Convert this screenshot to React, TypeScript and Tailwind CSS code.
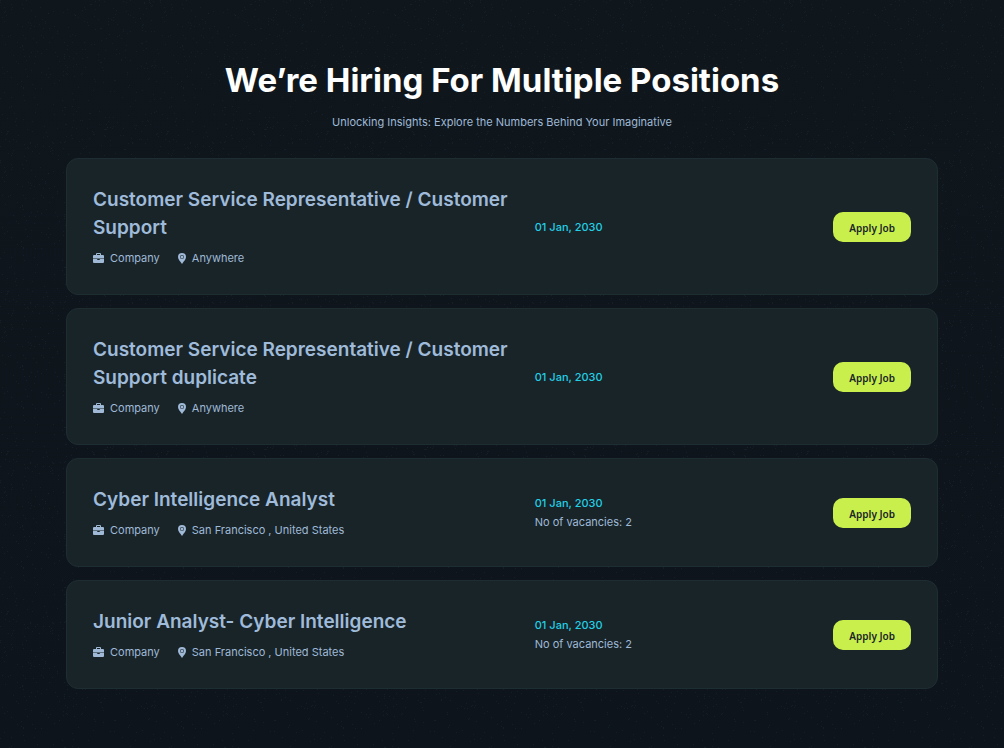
type Job = {
  title: string;
  company: string;
  location: string;
  date: string;
  vacancies?: number;
};

const jobs: Job[] = [
  {
    title: "Customer Service Representative / Customer Support",
    company: "Company",
    location: "Anywhere",
    date: "01 Jan, 2030",
  },
  {
    title: "Customer Service Representative / Customer Support duplicate",
    company: "Company",
    location: "Anywhere",
    date: "01 Jan, 2030",
  },
  {
    title: "Cyber Intelligence Analyst",
    company: "Company",
    location: "San Francisco , United States",
    date: "01 Jan, 2030",
    vacancies: 2,
  },
  {
    title: "Junior Analyst- Cyber Intelligence",
    company: "Company",
    location: "San Francisco , United States",
    date: "01 Jan, 2030",
    vacancies: 2,
  },
];

// Fixed speckles for one tile of the background grain
const TILE = 160;
const specks = Array.from({ length: 420 }, (_, i) => ({
  x: (i * 73 + ((i * i * 31) % 97)) % TILE,
  y: (i * 41 + ((i * i * 17) % 113)) % TILE,
}));

const Grain = () => (
  <svg className="pointer-events-none absolute inset-0 h-full w-full" aria-hidden="true">
    <defs>
      <pattern id="grain" width={TILE} height={TILE} patternUnits="userSpaceOnUse">
        {specks.map((s, i) => (
          <rect key={i} x={s.x} y={s.y} width="1" height="1" fill="#1b2a30" fillOpacity="0.5" />
        ))}
      </pattern>
    </defs>
    <rect width="100%" height="100%" fill="url(#grain)" />
  </svg>
);

const BriefcaseIcon = () => (
  <svg viewBox="0 0 22 20" className="h-[10px] w-[11px]" fill="currentColor" aria-hidden="true">
    <path
      fillRule="evenodd"
      d="M8 0h6a2 2 0 0 1 2 2v2h4a2 2 0 0 1 2 2v5H0V6a2 2 0 0 1 2-2h4V2a2 2 0 0 1 2-2Zm0 2v2h6V2H8Z"
    />
    <path
      fillRule="evenodd"
      d="M0 12h22v6a2 2 0 0 1-2 2H2a2 2 0 0 1-2-2Zm8.500 0v2h5v-2Z"
    />
  </svg>
);

const PinIcon = () => (
  <svg viewBox="0 0 16 22" className="h-[11px] w-2" fill="currentColor" aria-hidden="true">
    <path
      fillRule="evenodd"
      d="M8 0a8 8 0 0 1 8 8c0 4.500-3.500 7.500-8 14C3.500 15.500 0 12.500 0 8a8 8 0 0 1 8-8Zm0 4a4 4 0 1 0 0 8 4 4 0 0 0 0-8Z"
    />
    <circle cx="8" cy="8" r="3" />
  </svg>
);

const JobCard = ({ job }: { job: Job }) => (
  <li className="grid grid-cols-[54%_1fr_auto] items-center rounded-xl border border-[#1e2d32] bg-[#192429] px-[26px] pt-[27px] pb-[26px]">
    <div>
      <h2 className="pr-4 text-[19px] leading-7 font-semibold text-[#9fbbd9]">{job.title}</h2>
      <div className="mt-1.5 flex items-center gap-[18px] text-[11px] leading-5">
        <span className="flex items-center gap-1.5">
          <BriefcaseIcon />
          {job.company}
        </span>
        <span className="flex items-center gap-1.5">
          <PinIcon />
          {job.location}
        </span>
      </div>
    </div>
    <div className="text-[11px] leading-[19px]">
      <p className="font-medium text-[#22d0e6]">{job.date}</p>
      {job.vacancies && <p>No of vacancies: {job.vacancies}</p>}
    </div>
    <button
      type="button"
      className="h-[30px] rounded-[10px] bg-[#c8ef4c] px-4 pt-0.5 font-['Noto_Sans',sans-serif] text-[10px] font-semibold text-[#1a242a]"
    >
      Apply Job
    </button>
  </li>
);

export default function App() {
  return (
    <main className="relative min-h-screen bg-linear-to-b from-[#0f171d] to-[#0d141b] px-[66px] pt-14 pb-[59px] font-['Inter',sans-serif] text-[#9fb9d6]">
      <Grain />
      <div className="relative">
        <header className="text-center">
          <h1 className="text-[33px] leading-12 font-bold text-white">
            We’re Hiring For Multiple Positions
          </h1>
          <p className="mt-2 text-[11px] leading-5">
            Unlocking Insights: Explore the Numbers Behind Your Imaginative
          </p>
        </header>
        <ul className="mt-[26px] flex flex-col gap-[13px]">
          {jobs.map((job) => (
            <JobCard key={job.title} job={job} />
          ))}
        </ul>
      </div>
    </main>
  );
}
